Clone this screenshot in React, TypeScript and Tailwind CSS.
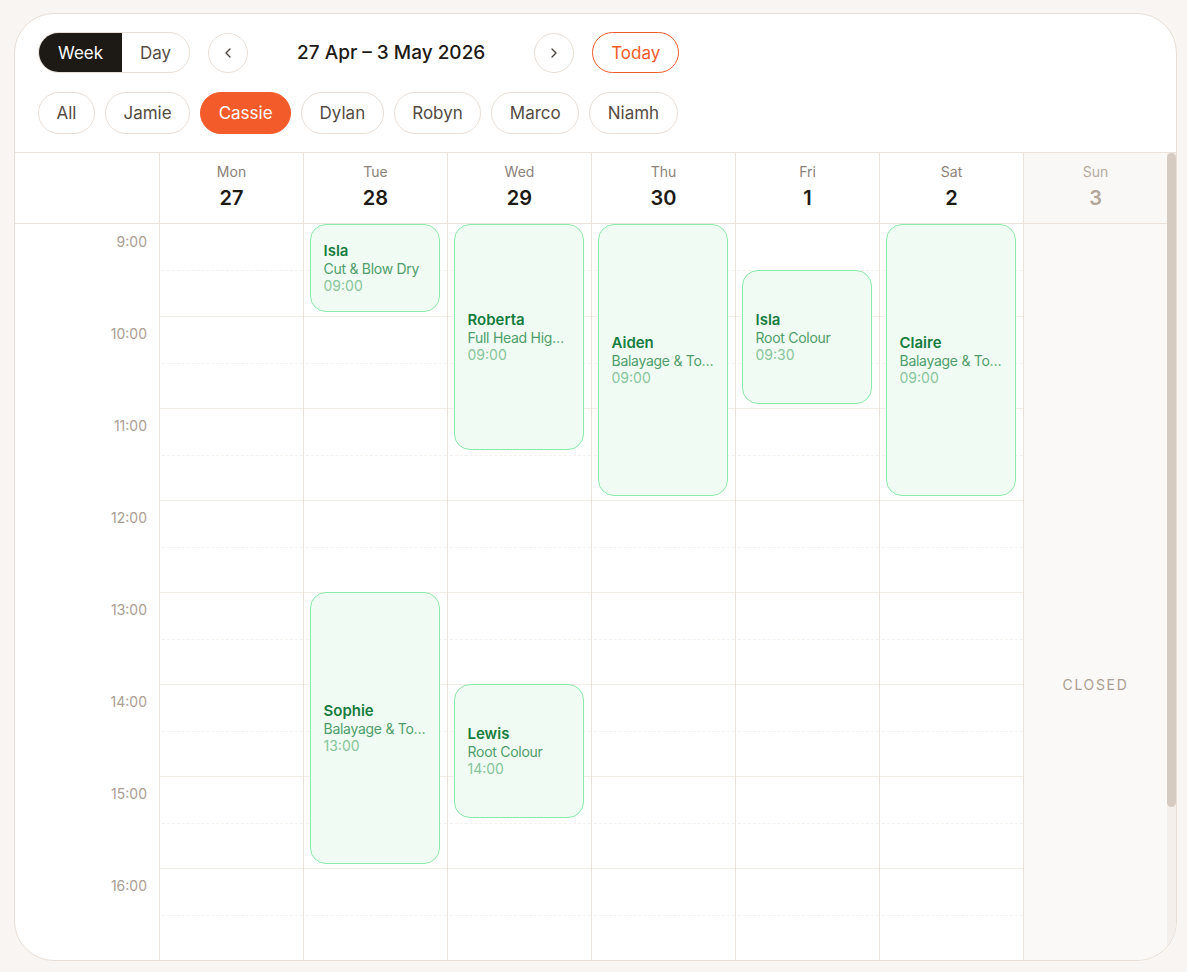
import { ChevronLeft, ChevronRight } from 'lucide-react';

type Booking = {
  day: number;
  client: string;
  service: string;
  start: number;
  duration: number;
};

const days = [
  { name: 'Mon', date: 27 },
  { name: 'Tue', date: 28 },
  { name: 'Wed', date: 29 },
  { name: 'Thu', date: 30 },
  { name: 'Fri', date: 1 },
  { name: 'Sat', date: 2 },
  { name: 'Sun', date: 3, closed: true },
];

const hours = [9, 10, 11, 12, 13, 14, 15, 16, 17, 18];

const staff = ['All', 'Jamie', 'Cassie', 'Dylan', 'Robyn', 'Marco', 'Niamh'];

const bookings: Booking[] = [
  { day: 1, client: 'Isla', service: 'Cut & Blow Dry', start: 9, duration: 1 },
  { day: 1, client: 'Sophie', service: 'Balayage & Toner', start: 13, duration: 3 },
  { day: 2, client: 'Roberta', service: 'Full Head Highlights', start: 9, duration: 2.5 },
  { day: 2, client: 'Lewis', service: 'Root Colour', start: 14, duration: 1.5 },
  { day: 3, client: 'Aiden', service: 'Balayage & Toner', start: 9, duration: 3 },
  { day: 4, client: 'Isla', service: 'Root Colour', start: 9.5, duration: 1.5 },
  { day: 5, client: 'Claire', service: 'Balayage & Toner', start: 9, duration: 3 },
];

const HOUR = 92;

const fmt = (t: number) => {
  const h = Math.floor(t);
  const m = t % 1 === 0 ? '00' : '30';
  return `${h.toString().padStart(2, '0')}:${m}`;
};

const BookingCard = ({ booking }: { booking: Booking }) => (
  <div
    className="absolute left-[6px] right-[7px] rounded-2xl border-[1.5px] border-[#8aeaa9] bg-[#f0fcf3] pl-[12.5px] pr-[11px] flex flex-col justify-center overflow-hidden"
    style={{ top: (booking.start - 9) * HOUR, height: booking.duration * HOUR - 4 }}
  >
    <div className="text-[15px] leading-[18px] font-semibold text-[#177d3f]">{booking.client}</div>
    <div className="text-[14px] leading-[17px] tracking-[-0.02em] text-[#4f9d6a] truncate">{booking.service}</div>
    <div className="text-[14px] leading-[18px] text-[#87c59b]">{fmt(booking.start)}</div>
  </div>
);

export default function App() {
  return (
    <div className="min-h-screen bg-[#f9f5f2] pt-[13px] pl-[14px] font-['Inter',sans-serif]">
      <div className="w-[1163px] h-[948px] bg-white border border-[#e8ded5] rounded-[40px] overflow-hidden flex flex-col">
        {/* toolbar */}
        <div className="px-[23px] pt-[18px] pb-[18px] border-b border-[#ebe2d9] flex flex-col gap-[19px]">
          <div className="flex items-center gap-[18px]">
            <div className="flex h-[41px] rounded-full border border-[#e8ded5] overflow-hidden">
              <button className="px-[19px] pt-[2px] bg-[#1d1915] text-white text-[17px]">Week</button>
              <button className="px-[18px] pt-[2px] text-[#574d45] text-[17px]">Day</button>
            </div>
            <button className="w-10 h-10 rounded-full border border-[#e8ded5] flex items-center justify-center text-[#4a4139]">
              <ChevronLeft size={16} strokeWidth={2} />
            </button>
            <div className="w-[250px] pt-[2px] text-center text-[19px] font-medium text-[#1d1915]">27 Apr – 3 May 2026</div>
            <button className="w-10 h-10 rounded-full border border-[#e8ded5] flex items-center justify-center text-[#4a4139]">
              <ChevronRight size={16} strokeWidth={2} />
            </button>
            <button className="h-[41px] px-[18px] pt-[2px] rounded-full border-[1.5px] border-[#f05a29] text-[#f05a29] text-[17px]">
              Today
            </button>
          </div>
          <div className="flex items-center gap-[10px]">
            {staff.map((s) => (
              <button
                key={s}
                className={
                  s === 'Cassie'
                    ? 'h-[42px] px-[17.5px] pt-[2px] rounded-full border border-[#f45b2b] bg-[#f45b2b] text-white text-[17px]'
                    : 'h-[42px] px-[17.5px] pt-[2px] rounded-full border border-[#e8ded5] text-[#554b43] text-[17px]'
                }
              >
                {s}
              </button>
            ))}
          </div>
        </div>

        {/* calendar */}
        <div className="flex-1 min-h-0 flex">
          <div className="flex-1 overflow-y-auto [scrollbar-width:none]">
            <div className="sticky top-0 z-10 flex bg-white border-b border-[#ebe2d9]">
              <div className="w-[144px] h-[70px]" />
              {days.map((d) => (
                <div
                  key={d.name}
                  className={`w-[144px] h-[70px] border-l border-[#ebe2d9] flex flex-col items-center pt-[9px] ${d.closed ? 'bg-[#faf8f6]' : 'bg-white'}`}
                >
                  <div className={`text-[14px] leading-5 ${d.closed ? 'text-[#b5aaa0]' : 'text-[#8c8178]'}`}>{d.name}</div>
                  <div className={`text-[20px] leading-[32px] font-semibold ${d.closed ? 'text-[#b2a69b]' : 'text-[#1d1915]'}`}>
                    {d.date}
                  </div>
                </div>
              ))}
            </div>

            <div className="flex">
              <div className="w-[144px]">
                {hours.map((h) => (
                  <div key={h} className="h-[92px] pr-3 pt-[8px] text-right text-[14px] leading-5 text-[#aa9e94]">
                    {h}:00
                  </div>
                ))}
              </div>
              {days.map((d, di) => (
                <div
                  key={d.name}
                  className={`relative w-[144px] border-l border-[#ebe2d9] ${d.closed ? 'bg-[#faf9f7]' : 'bg-white'}`}
                >
                  {d.closed ? (
                    <div className="h-[920px] flex items-center justify-center text-[14px] tracking-[0.12em] text-[#aa9e94]">
                      CLOSED
                    </div>
                  ) : (
                    <>
                      {hours.map((h, hi) => (
                        <div key={h} className={`relative h-[92px] ${hi === 0 ? '' : 'border-t border-[#f3ede7]'}`}>
                          <div className="absolute left-[2px] right-0 top-[46px] border-t border-dashed border-[#f5f1ed]" />
                        </div>
                      ))}
                      {bookings
                        .filter((b) => b.day === di)
                        .map((b) => (
                          <BookingCard key={b.client + b.start} booking={b} />
                        ))}
                    </>
                  )}
                </div>
              ))}
            </div>
          </div>

          {/* scrollbar */}
          <div className="w-[9px] bg-[#f4efea] flex flex-col">
            <div className="h-[654px] rounded-full bg-[#d6cbc1]" />
          </div>
        </div>
      </div>
    </div>
  );
}
